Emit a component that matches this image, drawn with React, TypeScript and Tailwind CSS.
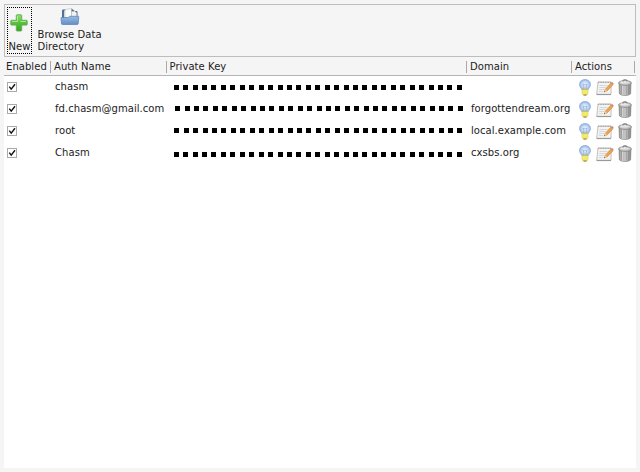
import React from "react";

function PlusIcon() {
  return (
    <svg width="18" height="18" viewBox="0 0 18 18" className="block">
      <defs>
        <linearGradient id="plus" x1="0" y1="0" x2="0" y2="1">
          <stop offset="0" stopColor="#8fdc6c" />
          <stop offset="0.5" stopColor="#58c23c" />
          <stop offset="1" stopColor="#3aa023" />
        </linearGradient>
      </defs>
      <path d="M7 .8h4q.7 0 .7.7v4.8h4.8q.7 0 .7.7v3.4q0 .7-.7.7h-4.8v5.2q0 .7-.7.7H7q-.7 0-.7-.7v-5.2H1.500q-.7 0-.7-.7V7q0-.7.7-.7h4.800V1.500q0-.7.7-.7z" fill="url(#plus)" stroke="#5fae52" strokeWidth="0.9" />
      <path d="M7.500 2v5.500H2M10.600 7.500H16" fill="none" stroke="#b9efa0" strokeWidth="0.8" />
    </svg>
  );
}

function FolderIcon() {
  return (
    <svg width="20" height="18" viewBox="0 0 20 18" className="block">
      <defs>
        <linearGradient id="folder" x1="0" y1="0" x2="0" y2="1">
          <stop offset="0" stopColor="#9bbbe0" />
          <stop offset="1" stopColor="#618fc6" />
        </linearGradient>
      </defs>
      <path d="M2 9V2.500q0-1 1-1h3l1 1.500h9.500q1 0 1 1V10H2z" fill="#526f97" />
      <path d="M4 10V3l2-1.500V10z" fill="#dce1e8" />
      <path d="M5 10V1.500L11.500.6l3 2.400V10z" fill="#fbfbfb" stroke="#a7adb5" strokeWidth="0.5" />
      <path d="M11.500 10V3l3-.3 2.300 2.300V10z" fill="#eef1f5" stroke="#8992a0" strokeWidth="0.5" />
      <path d="M11.500.6V3.200h3z" fill="#596270" />
      <path d="M1.200 9.500h7l1.500-1.200h8.600q.6 0 .5.700l-.6 6.800q-.1.700-.8.700H2.300q-.7 0-.8-.7L1 10z" fill="url(#folder)" stroke="#5580b4" strokeWidth="0.7" />
    </svg>
  );
}

function BulbIcon() {
  return (
    <svg width="12" height="17" viewBox="0 0 12 17" className="block">
      <defs>
        <radialGradient id="bulb">
          <stop offset="0" stopColor="#eef5ff" />
          <stop offset="0.6" stopColor="#c2d8f5" />
          <stop offset="1" stopColor="#91b3e2" />
        </radialGradient>
      </defs>
      <path d="M6 .5C2.800.5.500 2.700.500 5.500c0 2.300 1.700 3.300 2.400 5.200h6.200c.7-1.900 2.400-2.900 2.400-5.200C11.500 2.700 9.200.5 6 .5z" fill="url(#bulb)" stroke="#91aed8" strokeWidth="0.8" />
      <path d="M4.800 10.500V7L3.900 5.200l1.300.7.8-.8.8.8 1.300-.7L7.200 7v3.500" fill="none" stroke="#8fa5c2" strokeWidth="0.6" />
      <path d="M3 10.500h6v4q-1 2-3 2t-3-2z" fill="#efe34d" stroke="#c8b830" strokeWidth="0.5" />
      <path d="M3 12h6M3 14h6" stroke="#fbf6a4" strokeWidth="0.7" />
      <path d="M4.500 16h3" stroke="#77734d" strokeWidth="0.8" />
    </svg>
  );
}

function NoteIcon() {
  return (
    <svg width="18" height="16" viewBox="0 0 18 16" className="mt-px block">
      <path d="M2 2h13.200l-.2 12.300H.700z" fill="#f3f3f1" stroke="#b3b3b0" strokeWidth="0.8" />
      <path d="M2 2.400h13" stroke="#a3a3a0" strokeWidth="1.300" strokeDasharray="1 0.7" />
      <path d="M3.500 5.500h8M3.300 7.500h6.500M3.100 9.500h5M2.900 11.500h4" stroke="#cdcfd4" strokeWidth="0.8" />
      <path d="M.7 14.600H15" stroke="#8d8d8d" strokeWidth="0.9" />
      <path d="M8.300 11.900l1-2.700L15 3.100l2 1.700-5.900 6.100z" fill="#eea449" stroke="#c98246" strokeWidth="0.6" />
      <path d="M8.100 12.200l1.200-3 1.800 1.700z" fill="#ecd5b5" />
      <path d="M15 3.100l1.200-1 1.500 1.400-.7 1.300z" fill="#d5836d" />
      <path d="M8 12.300l.5-1.300.8.800z" fill="#4a4038" />
    </svg>
  );
}

function TrashIcon() {
  return (
    <svg width="14" height="17" viewBox="0 0 14 17" className="-ml-px block">
      <defs>
        <linearGradient id="can">
          <stop offset="0" stopColor="#8d8d8d" />
          <stop offset="0.35" stopColor="#e8e8e8" />
          <stop offset="0.65" stopColor="#c0c0c0" />
          <stop offset="1" stopColor="#7f7f7f" />
        </linearGradient>
      </defs>
      <path d="M1.100 4.500h11.800l-.3 10.300q-1.300 1.700-5.600 1.700t-5.600-1.700z" fill="url(#can)" stroke="#808080" strokeWidth="0.7" />
      <path d="M3.500 6.500l.2 8.500M5.900 7v8.700M8.200 7v8.700M10.500 6.500l-.2 8.500" stroke="#8a8a8a" strokeWidth="0.7" />
      <ellipse cx="7" cy="4" rx="6.500" ry="2.400" fill="#c4c4c4" stroke="#777" strokeWidth="0.7" />
      <ellipse cx="6.500" cy="3.300" rx="4.300" ry="1.200" fill="#e6e6e6" />
      <path d="M5 2.600V1.200q2-1.200 4 0v1.400" fill="none" stroke="#777" strokeWidth="0.9" />
    </svg>
  );
}

function CheckBox() {
  return (
    <svg width="10" height="10" viewBox="0 0 10 10" className="block" role="checkbox" aria-checked="true">
      <rect x="0.5" y="0.5" width="9" height="9" fill="#fff" stroke="#aaa" />
      <path d="M2.300 4.600l1.900 2.500L8 2.300" fill="none" stroke="#111" strokeWidth="1.400" />
    </svg>
  );
}

const rows = [
  { name: "chasm", domain: "", keyClass: "ml-[6.700px] w-[288.500px] mt-[9px]" },
  { name: "fd.chasm@gmail.com", domain: "forgottendream.org", keyClass: "ml-[8.200px] w-[288px] mt-[8px]" },
  { name: "root", domain: "local.example.com", keyClass: "ml-[7.300px] w-[288.500px] mt-[8px]" },
  { name: "Chasm", domain: "cxsbs.org", keyClass: "ml-[6.700px] w-[288.500px] mt-[10px]" },
];

const cols = "grid grid-cols-[47px_116px_300px_105px_63px]";
const headers = [
  { label: "Enabled", pad: "pl-[2px]" },
  { label: "Auth Name", pad: "pl-[3px]" },
  { label: "Private Key", pad: "pl-[2.500px]" },
  { label: "Domain", pad: "pl-[3px]" },
  { label: "Actions", pad: "pl-[3px]" },
];

export default function App() {
  return (
    <div className="flex h-[472px] w-[640px] flex-col bg-[#f5f5f5] px-1 pt-1 pb-1 font-['DejaVu_Sans',sans-serif] text-[10px] leading-3 tracking-[0.06px] text-[#222]">
      <div className="flex h-[53px] w-[632px] shrink-0 border border-[#bdbdbd]">
        <button className="mt-[2px] ml-[2px] flex h-[47px] w-[25px] flex-col items-center border border-dotted border-black pt-[6px]">
          <span className="-ml-[2px]"><PlusIcon /></span>
          <span className="mt-[9px] whitespace-nowrap leading-3">New</span>
        </button>
        <button className="ml-[5.500px] flex w-[66px] flex-col pt-[3px] text-left">
          <span className="ml-[22px]"><FolderIcon /></span>
          <span className="mt-[3px] whitespace-nowrap leading-3">Browse Data<br />Directory</span>
        </button>
      </div>
      <div className={`${cols} h-[19px] w-[632px] shrink-0 border-b border-[#b5b5b5]`}>
        {headers.map((h) => (
          <div key={h.label} className={`mt-1 flex h-3 border-r border-[#aaa] whitespace-nowrap ${h.pad}`}>{h.label}</div>
        ))}
      </div>
      <div className="w-[632px] flex-1 bg-white">
        {rows.map((r) => (
          <div key={r.name} className={`${cols} h-[22px]`}>
            <div className="pt-[6px] pl-[3px]"><CheckBox /></div>
            <div className="pt-[5px] pl-1 whitespace-nowrap">{r.name}</div>
            <div>
              <div className={`flex justify-between ${r.keyClass}`}>
                {Array.from({ length: 31 }, (_, i) => <span key={i} className="size-[5px] bg-black" />)}
              </div>
            </div>
            <div className="pt-[5px] pl-1 whitespace-nowrap">{r.domain}</div>
            <div className="flex items-start gap-[5px] pt-[3px] pl-[7px]">
              <BulbIcon />
              <NoteIcon />
              <TrashIcon />
            </div>
          </div>
        ))}
      </div>
    </div>
  );
}
